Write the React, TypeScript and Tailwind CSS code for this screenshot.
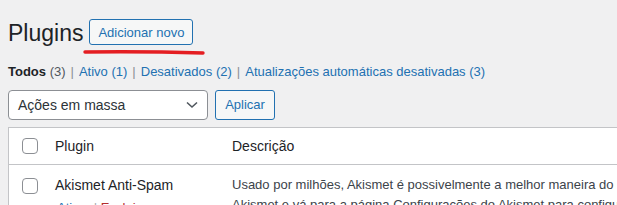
import React from 'react';

const filters = [
  { label: 'Ativo', count: 1 },
  { label: 'Desativados', count: 2 },
  { label: 'Atualizações automáticas desativadas', count: 3 },
];

function Checkbox() {
  return <span className="block w-4 h-4 rounded-[4px] border border-[#8c8f94] bg-white shrink-0" />;
}

export default function App() {
  return (
    <div className="w-[617px] h-[205px] overflow-hidden bg-[#f0f0f1] text-[13px] text-[#3c434a] font-['Liberation_Sans',Arial,sans-serif]">
      <div className="pl-2">
        {/* title row */}
        <div className="flex items-start pt-[19px]">
          <h1 className="text-[23px] leading-[29px] font-normal text-[#1d2327]">Plugins</h1>
          <div className="relative ml-[6px]">
            <button className="h-[26px] px-[8px] pt-[1px] rounded-[3px] border border-[#2271b1] bg-[#f6f7f7] text-[#2271b1] text-[13px] leading-none">
              Adicionar novo
            </button>
            {/* red annotation stroke */}
            <svg className="absolute left-[-6px] top-[30px]" width="124" height="7" viewBox="0 0 124 7">
              <path d="M2 3 Q 60 2.2 120 4" stroke="#e41e22" strokeWidth="3.4" strokeLinecap="round" fill="none" />
            </svg>
          </div>
        </div>

        {/* filter links */}
        <ul className="mt-[14px] flex items-center leading-[20px] whitespace-nowrap">
          <li>
            <span className="font-bold text-[#1d2327]">Todos</span>
            <span className="text-[#50575e]"> (3)</span>
          </li>
          {filters.map((f) => (
            <li key={f.label}>
              <span className="text-[#8c8f94] px-[5px]">|</span>
              <span className="text-[#2271b1]">{f.label} ({f.count})</span>
            </li>
          ))}
        </ul>

        {/* bulk actions */}
        <div className="mt-[8px] flex items-center gap-[7px]">
          <div className="w-[200px] h-[30px] flex items-center justify-between pl-[9px] pr-[9px] rounded-[4px] border border-[#8c8f94] bg-white text-[14px] text-[#2c3338]">
            <span>Ações em massa</span>
            <svg width="12" height="8" viewBox="0 0 12 8">
              <path d="M1 1.5 L6 6 L11 1.5" stroke="#50575e" strokeWidth="1.6" fill="none" />
            </svg>
          </div>
          <button className="w-[60px] h-[30px] rounded-[3px] border border-[#2271b1] bg-[#f6f7f7] text-[#2271b1] text-[13px]">
            Aplicar
          </button>
        </div>

        {/* table */}
        <div className="mt-[7px] w-[720px] border-l border-t border-[#c3c4c7] bg-white">
          <div className="flex h-[37px] items-center border-b border-[#c3c4c7] text-[14px] text-[#1d2327]">
            <div className="w-[36px] shrink-0 pl-[13px]">
              <Checkbox />
            </div>
            <div className="w-[177px] shrink-0 px-[10px] pt-[1px]">Plugin</div>
            <div className="px-[10px] pt-[1px]">Descrição</div>
          </div>
          <div className="flex items-start">
            <div className="w-[36px] shrink-0 pl-[13px] pt-[13px]">
              <Checkbox />
            </div>
            <div className="w-[177px] shrink-0 px-[10px] pt-[10px] whitespace-nowrap">
              <div className="text-[14px] leading-[20px] text-[#1d2327]">Akismet Anti-Spam</div>
              <div className="leading-[19.5px] pl-[2px] pt-[3px]">
                <span className="text-[#2271b1]">Ativar</span>
                <span className="text-[#a7aaad]"> | </span>
                <span className="text-[#b32d2e]">Excluir</span>
              </div>
            </div>
            <div className="px-[10px] pt-[10px] leading-[19.5px] whitespace-nowrap">
              <div>Usado por milhões, Akismet é possivelmente a melhor maneira do mundo de proteger seu blog contra spam.</div>
              <div>Akismet e vá para a página Configurações do Akismet para configurar sua chave de API.</div>
            </div>
          </div>
        </div>
      </div>
    </div>
  );
}
